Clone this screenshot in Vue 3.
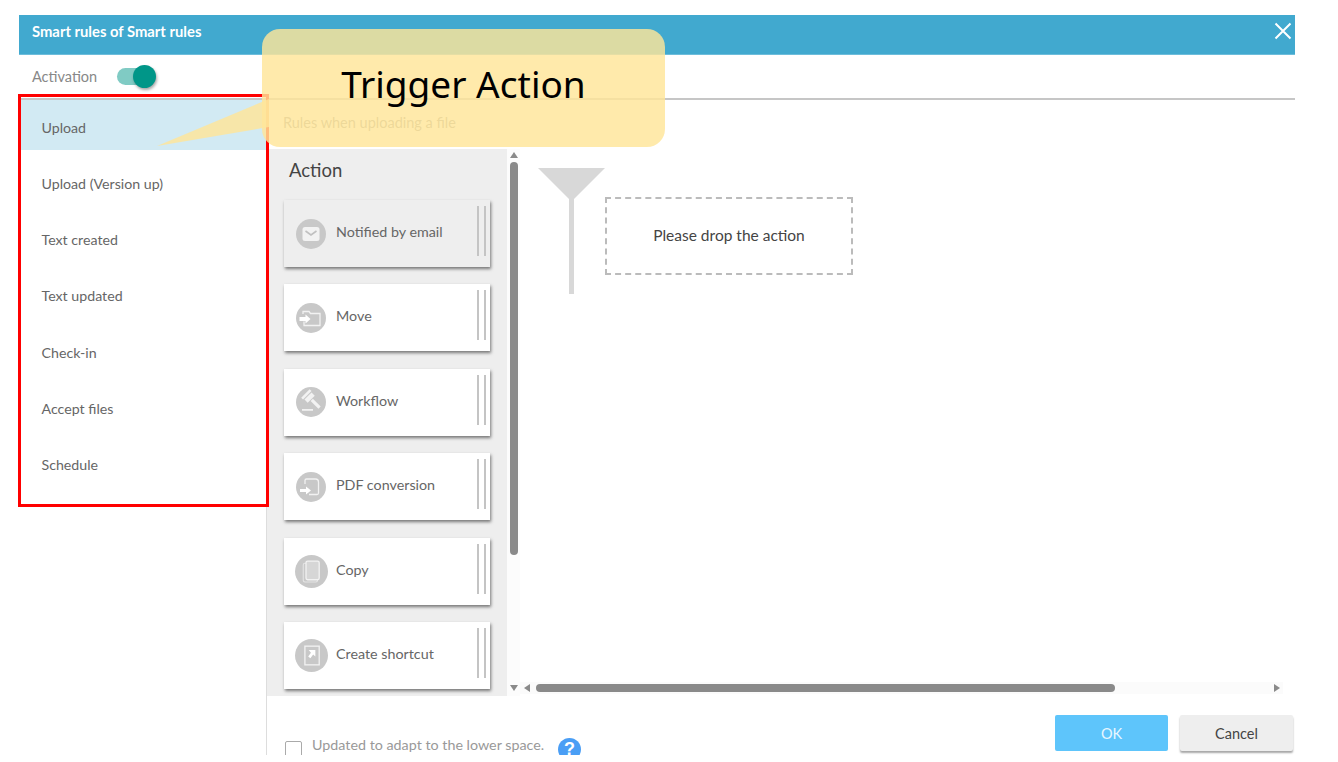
<script setup>
const triggers = ['Upload', 'Upload (Version up)', 'Text created', 'Text updated', 'Check-in', 'Accept files', 'Schedule']
const actions = [
  { name: 'Notified by email', icon: 'mail', off: true },
  { name: 'Move', icon: 'move' },
  { name: 'Workflow', icon: 'gavel' },
  { name: 'PDF conversion', icon: 'pdf' },
  { name: 'Copy', icon: 'copy', big: true },
  { name: 'Create shortcut', icon: 'link', big: true }
]
</script>

<template>
  <div class="page">
    <div class="dialog">
      <header class="head">
        <span class="title">Smart rules of Smart rules</span>
        <svg class="close" width="18" height="18" viewBox="0 0 18 18"><path d="M1.5 1.5 16.5 16.5M16.5 1.5 1.5 16.5" stroke="#fff" stroke-width="2" fill="none" /></svg>
      </header>
      <div class="activation">
        <span class="act-label">Activation</span>
        <span class="toggle"><span class="knob"></span></span>
      </div>
      <div class="main">
        <aside class="side">
          <div v-for="(t, i) in triggers" :key="t" class="trigger" :class="{ on: i === 0 }">{{ t }}</div>
        </aside>
        <section class="content">
          <div class="rule-note">Rules when uploading a file</div>
          <div class="work">
            <div class="palette">
              <h2 class="pal-title">Action</h2>
              <div v-for="a in actions" :key="a.name" class="card" :class="{ off: a.off, big: a.big }">
                <svg class="ic" viewBox="0 0 30 30">
                  <circle cx="15" cy="15" r="15" fill="#c8c8c8" />
                  <g v-if="a.icon === 'mail'">
                    <rect x="6.5" y="8" width="17" height="14" rx="2.5" fill="#f2f2f2" />
                    <path d="M9.5 12 15 16 20.5 12" stroke="#c0c0c0" stroke-width="1.6" fill="none" />
                  </g>
                  <g v-else-if="a.icon === 'move'">
                    <path d="M7 11V8.5h6l1.500 2H24v12H8v-4" stroke="#f2f2f2" stroke-width="1.3" fill="none" />
                    <path d="M3.500 14h6v-2.500l5 4.500-5 4.500v-2.500h-6z" fill="#fff" />
                  </g>
                  <g v-else-if="a.icon === 'gavel'" fill="#f2f2f2">
                    <g transform="rotate(-45 14 11)">
                      <rect x="8" y="4.500" width="12" height="2.600" />
                      <rect x="9" y="8.200" width="10" height="4.500" />
                      <rect x="12.400" y="13.500" width="3.200" height="11" />
                    </g>
                    <rect x="6" y="22" width="11" height="1.800" />
                  </g>
                  <g v-else-if="a.icon === 'pdf'">
                    <path d="M9 12V8.500a1.500 1.500 0 0 1 1.500-1.500h9A3 3 0 0 1 22.500 10v11a1.500 1.500 0 0 1-1.500 1.500H13" stroke="#f2f2f2" stroke-width="1.3" fill="none" />
                    <path d="M4 17h6v-2.500l5 4-5 4V20H4z" fill="#fff" />
                  </g>
                  <g v-else-if="a.icon === 'copy'">
                    <rect x="7.500" y="7.500" width="13" height="17" rx="1.500" fill="none" stroke="#e4e4e4" stroke-width="1" />
                    <rect x="10" y="5.500" width="12" height="17" rx="1.500" fill="#d6d6d6" stroke="#f2f2f2" stroke-width="1.200" />
                  </g>
                  <g v-else>
                    <rect x="9" y="6.500" width="13" height="17" fill="none" stroke="#f2f2f2" stroke-width="1.200" />
                    <path d="M12.500 10h6v6l-2-2-2.500 3.500-2-1.500 2.500-3.500z" fill="#fff" />
                  </g>
                </svg>
                <span class="card-name">{{ a.name }}</span>
                <span class="grip"></span>
              </div>
            </div>
            <div class="vbar">
              <span class="arrow up"></span>
              <span class="vthumb"></span>
              <span class="arrow down"></span>
            </div>
            <div class="stage">
              <div class="canvas">
                <svg class="funnel" width="68" height="128" viewBox="0 0 68 128">
                  <path d="M0 0H67L36 31V126H31V31Z" fill="#d8d8d8" />
                </svg>
                <div class="drop">Please drop the action</div>
              </div>
              <div class="hbar">
                <span class="arrow left"></span>
                <span class="hthumb"></span>
                <span class="arrow right"></span>
              </div>
            </div>
          </div>
          <footer class="foot">
            <label class="check">
              <span class="box"></span>
              <span class="check-text">Updated to adapt to the lower space.</span>
            </label>
            <span class="help">?</span>
            <span class="btn ok">OK</span>
            <span class="btn cancel">Cancel</span>
          </footer>
        </section>
      </div>
    </div>

    <div class="red-frame"></div>
    <svg class="tail" width="112" height="50" viewBox="0 0 112 50"><path d="M112 0 0 47 112 28Z" fill="#ffe599" fill-opacity=".82" /></svg>
    <div class="callout">Trigger Action</div>
  </div>
</template>

<style>
html, body { background: #fff; }
</style>

<style scoped>
.page {
  position: relative;
  width: 1338px;
  height: 762px;
  padding: 15px 0 0 19px;
  box-sizing: border-box;
  overflow: hidden;
  background: #fff;
  font-family: "Lato", "Noto Sans", sans-serif;
  font-size: 14px;
  color: #666;
}
.dialog {
  width: 1276px;
  height: 740px;
  display: flex;
  flex-direction: column;
  overflow: hidden;
}
.head {
  height: 40px;
  flex: none;
  display: flex;
  align-items: flex-start;
  justify-content: space-between;
  padding: 7px 3px 0 13px;
  box-sizing: border-box;
  background: #41a9cf;
  border-bottom: 1px solid #6dbddb;
}
.title { color: #fff; font-weight: 700; font-size: 14.800px; line-height: 18px; }
.close { display: block; }
.activation {
  height: 43px;
  flex: none;
  display: flex;
  align-items: center;
  padding: 0 0 0 13px;
  border-bottom: 2px solid #c6c6c6;
  box-sizing: content-box;
}
.act-label { width: 85px; color: #888; font-size: 14.500px; }
.toggle {
  position: relative;
  width: 33px;
  height: 17px;
  border-radius: 9px;
  background: #80cbc4;
}
.knob {
  position: absolute;
  right: -6px;
  top: -3px;
  width: 23px;
  height: 23px;
  border-radius: 50%;
  background: #009688;
  box-shadow: 1px 2px 3px rgba(0, 0, 0, .35);
}
.main { flex: 1; display: flex; min-height: 0; }
.side { width: 247px; flex: none; }
.trigger {
  height: 50px;
  margin-bottom: 6.300px;
  padding: 4px 0 0 22.500px;
  box-sizing: border-box;
  display: flex;
  align-items: center;
  color: #666;
  font-size: 14.200px;
}
.trigger.on { background: #d2eaf3; }
.content {
  flex: 1;
  min-width: 0;
  display: flex;
  flex-direction: column;
  border-left: 1px solid #ddd;
}
.rule-note {
  height: 49px;
  flex: none;
  padding: 14px 0 0 16px;
  box-sizing: border-box;
  color: #999;
  font-size: 14.500px;
}
.work { height: 547px; flex: none; display: flex; }
.palette {
  width: 240px;
  flex: none;
  height: 547px;
  overflow: hidden;
  background: #eee;
  padding: 0 0 0 17px;
  box-sizing: border-box;
}
.pal-title {
  margin: 0 0 0 5px;
  height: 51px;
  font-weight: 400;
  font-size: 18.500px;
  line-height: 42px;
  color: #444;
}
.card {
  width: 206px;
  height: 67px;
  margin-bottom: 17.400px;
  display: flex;
  align-items: center;
  background: #fff;
  box-shadow: 1px 2px 3px rgba(0, 0, 0, .5);
  padding-left: 12px;
  box-sizing: border-box;
  position: relative;
}
.card.off { background: #eee; }
.ic { flex: none; display: block; width: 30px; height: 30px; }
.card.big { padding-left: 11px; }
.card.big .ic { width: 33px; height: 33px; }
.card.big .card-name { margin-left: 8px; }
.card-name { margin-left: 10px; color: #666; font-size: 14.300px; position: relative; top: -2px; }
.grip {
  position: absolute;
  right: 4px;
  top: 6px;
  width: 9px;
  height: 50px;
  border-left: 2px solid #c4c4c4;
  border-right: 2px solid #c4c4c4;
  box-sizing: border-box;
}
.vbar {
  width: 13px;
  flex: none;
  display: flex;
  flex-direction: column;
  align-items: center;
  padding-top: 1px;
  background: #fcfcfc;
  box-sizing: border-box;
  height: 547px;
}
.vthumb {
  width: 8px;
  height: 393px;
  margin-top: 4px;
  border-radius: 4px;
  background: #8a8a8a;
}
.arrow { display: block; width: 0; height: 0; border-style: solid; border-color: transparent; }
.arrow.up { margin-top: 2px; border-width: 0 4.500px 6px; border-bottom-color: #8a8a8a; }
.arrow.down { margin-top: auto; margin-bottom: 5px; border-width: 6px 4.500px 0; border-top-color: #8a8a8a; }
.arrow.left { border-width: 4.500px 6px 4.500px 0; border-right-color: #8a8a8a; }
.arrow.right { border-width: 4.500px 0 4.500px 6px; border-left-color: #8a8a8a; margin-left: auto; }
.stage { flex: 1; min-width: 0; display: flex; flex-direction: column; }
.canvas { flex: 1; position: relative; }
.funnel { position: absolute; left: 18px; top: 19px; display: block; }
.drop {
  position: absolute;
  left: 85px;
  top: 48px;
  width: 248px;
  height: 78px;
  box-sizing: border-box;
  border: 2px dashed #bbb;
  padding-bottom: 3px;
  display: flex;
  align-items: center;
  justify-content: center;
  color: #444;
  font-size: 15.500px;
}
.hbar {
  height: 12px;
  margin-right: 12px;
  margin-bottom: 2px;
  padding: 0 3px 0 4px;
  display: flex;
  align-items: center;
  background: #fbfbfb;
}
.hthumb {
  width: 579px;
  height: 8px;
  margin-left: 6px;
  border-radius: 4px;
  background: #8a8a8a;
}
.foot {
  flex: 1;
  position: relative;
  display: flex;
  min-height: 0;
  padding-top: 19px;
  box-sizing: border-box;
}
.check { position: absolute; left: 18px; top: 41px; display: flex; }
.box {
  width: 17px;
  height: 17px;
  margin-top: 4px;
  box-sizing: border-box;
  border: 1px solid #aaa;
  border-radius: 2px;
}
.check-text { margin-left: 10px; color: #999; font-size: 14.300px; line-height: 16px; }
.help {
  position: absolute;
  left: 291px;
  top: 42px;
  width: 23px;
  height: 23px;
  border-radius: 50%;
  background: #4a9ef5;
  color: #fff;
  font: 700 18px/23px "Liberation Sans", sans-serif;
  text-align: center;
}
.btn {
  width: 113px;
  height: 36px;
  display: flex;
  align-items: center;
  justify-content: center;
  border-radius: 2px;
  font-size: 14.500px;
}
.ok { margin-left: auto; background: #5ec5fb; color: #e8f7ff; }
.cancel {
  margin-left: 12px;
  margin-right: 2px;
  background: #eee;
  color: #444;
  box-shadow: 0 2px 2px rgba(0, 0, 0, .35);
}
.red-frame {
  position: absolute;
  left: 18px;
  top: 94px;
  width: 251px;
  height: 413px;
  box-sizing: border-box;
  border: 3px solid #f00;
}
.tail { position: absolute; left: 157px; top: 99px; display: block; }
.callout {
  position: absolute;
  left: 262px;
  top: 29px;
  width: 403px;
  height: 118px;
  box-sizing: border-box;
  padding-top: 30px;
  border-radius: 18px;
  background: rgba(255, 229, 153, .82);
  color: #000;
  font-family: "Noto Sans", sans-serif;
  font-size: 37px;
  line-height: 50px;
  text-align: center;
}
</style>
